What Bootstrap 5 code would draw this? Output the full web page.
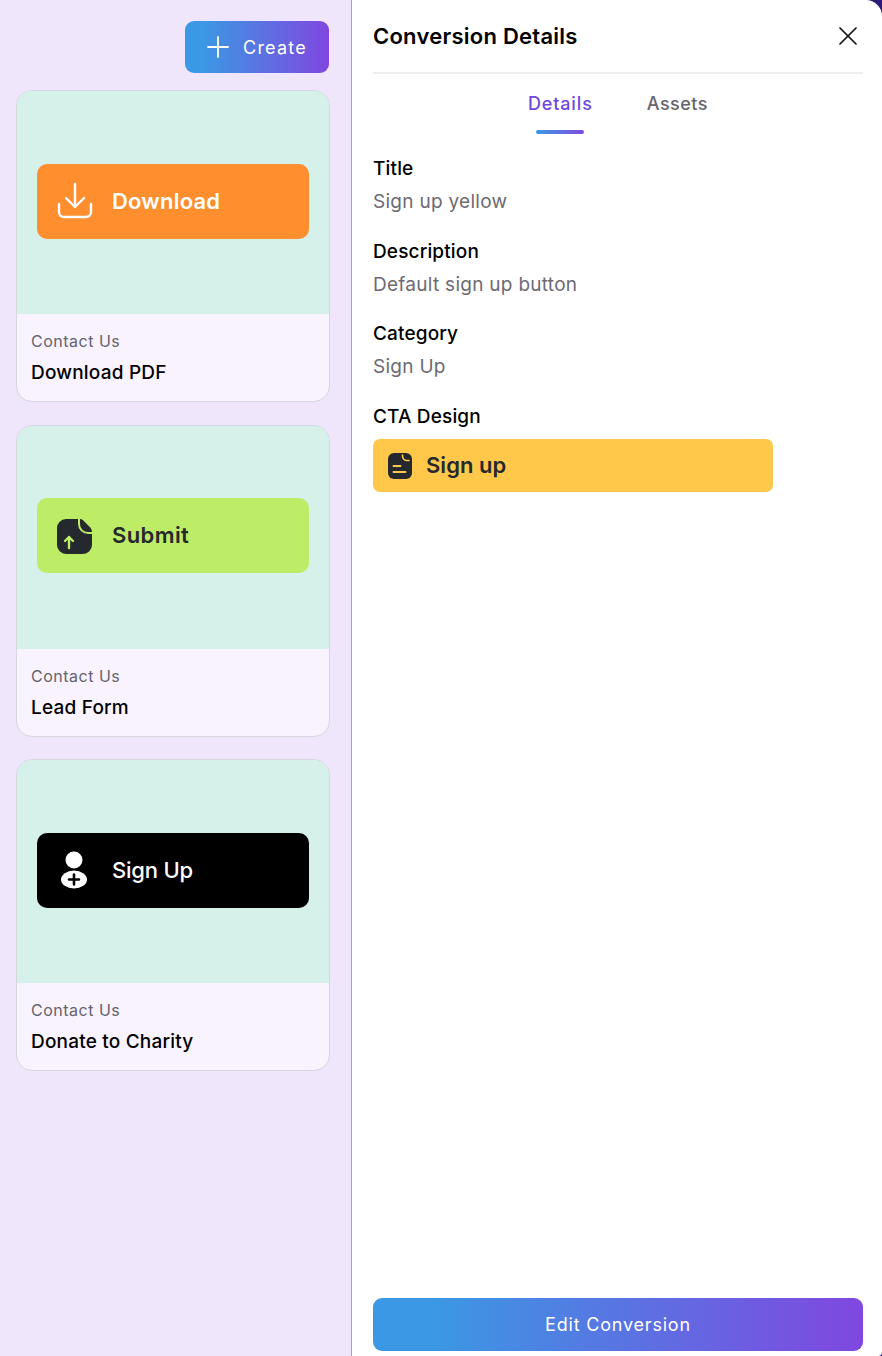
<!DOCTYPE html>
<html lang="en">
<head>
<meta charset="utf-8">
<title>Conversion Details</title>
<link href="https://cdn.jsdelivr.net/npm/bootstrap@5.3.0/dist/css/bootstrap.min.css" rel="stylesheet">
<style>
html,body{margin:0;height:1356px;overflow:hidden}
body{font-family:Inter,"Liberation Sans",sans-serif;background:#2d1a78;color:#000}
.shell{height:1356px;width:882px}
.side{width:352px;flex:0 0 352px;background:#efe6fb;border-right:1px solid #a99bc4;padding:21px 22px 0 16px}
.grad-btn{background:linear-gradient(90deg,#3b98e4 0%,#3b98e4 12%,#8047e0 100%);color:#fff;border:0;border-radius:9px;height:52px}
.grad-btn:hover{color:#fff}
.create-btn{width:144px;font-size:18px;font-weight:400;letter-spacing:1.2px;gap:14px;margin-bottom:17px}
.conv-card{width:314px;height:312px;border:1.5px solid #d6d6de;border-radius:16px;overflow:hidden;background:#f8f3fe;margin-bottom:22.5px}
.conv-media{height:223px;background:#d5f1e9;padding:0 20px 3px}
.cta-big{height:75px;border-radius:10px;padding-left:19px;gap:18px;font-size:22px;font-weight:600;letter-spacing:.2px}
.cta-orange{background:#ff8e2f;color:#fff}
.cta-lime{background:#bdec66;color:#25282d;letter-spacing:.4px}
.cta-black{background:#000;color:#fff;font-weight:500;letter-spacing:-.2px}
.conv-foot{padding:15px 14px}
.conv-cat{font-size:16px;line-height:24px;color:#66636d;letter-spacing:.5px;margin-bottom:8px}
.conv-name{font-size:19px;line-height:24px;font-weight:500;letter-spacing:.2px}
.panel{flex:1;background:#fff;border-radius:0 16px 4px 0;padding:0 19px 5px 21px}
.panel-head{height:74px;border-bottom:2px solid #eee}
.panel-title{font-size:22px;font-weight:600;margin:0;letter-spacing:.25px}
.close-x{background:none;border:0;padding:0;line-height:0;margin-right:5px}
.tabs-row{gap:54px;padding-top:16px;height:60px}
.tab-item{font-size:18px;font-weight:500;color:#67646d;position:relative;line-height:27px;letter-spacing:.5px}
.tab-on{color:#7048e0;letter-spacing:.85px}
.tab-on::after{content:"";position:absolute;left:8px;width:48px;top:40px;height:4px;border-radius:2px;background:linear-gradient(90deg,#3b98e4,#7e4ce0)}
.detail-wrap{padding-top:23px}
.detail-lab{font-size:19px;font-weight:500;line-height:24px;letter-spacing:.15px}
.detail-val{font-size:19px;line-height:28px;color:#6d6a74;letter-spacing:.28px;margin:7px 0 23.7px}
.cta-small{width:400px;height:53px;border-radius:7px;background:#ffc84b;color:#25282d;padding-left:15px;gap:14px;font-size:22px;font-weight:600;letter-spacing:.05px;margin-top:10px}
.edit-btn{font-size:18px;font-weight:400;width:490px;height:53px;letter-spacing:.8px}
</style>
</head>
<body>
<div class="shell d-flex">
  <aside class="side">
    <div class="d-flex justify-content-end">
      <button class="btn grad-btn create-btn d-flex align-items-center justify-content-center p-0" type="button">
        <svg width="22" height="22" viewBox="0 0 22 22" fill="none" stroke="#fff" stroke-width="1.8" stroke-linecap="round"><path d="M11 1v20M1 11h20"/></svg>
        <span>Create</span>
      </button>
    </div>

    <div class="conv-card">
      <div class="conv-media d-flex align-items-center">
        <div class="cta-big cta-orange w-100 d-flex align-items-center">
          <svg width="38" height="38" viewBox="0 0 38 38" fill="none" stroke="#fff" stroke-width="2.4" stroke-linecap="round" stroke-linejoin="round"><path d="M19 2v23M10 16l9 9 9-9"/><path d="M3 22v8a5 5 0 0 0 5 5h22a5 5 0 0 0 5-5v-8"/></svg>
          <span>Download</span>
        </div>
      </div>
      <div class="conv-foot">
        <div class="conv-cat">Contact Us</div>
        <div class="conv-name">Download PDF</div>
      </div>
    </div>

    <div class="conv-card">
      <div class="conv-media d-flex align-items-center">
        <div class="cta-big cta-lime w-100 d-flex align-items-center">
          <svg width="38" height="38" viewBox="0 0 38 38"><path fill="#25282d" d="M10 2h12v5a10 10 0 0 0 10 10h4v11a9 9 0 0 1-9 9H10a9 9 0 0 1-9-9V11a9 9 0 0 1 9-9z"/><path fill="#25282d" d="M24 2c1 0 2 .5 3 1.300l7 7c1 1 2 2.700 2 4.700h-4a8 8 0 0 1-8-8z"/><path fill="none" stroke="#bdec66" stroke-width="2.400" stroke-linecap="round" stroke-linejoin="round" d="M13 31V20M9 24l4-4 4 4"/></svg>
          <span>Submit</span>
        </div>
      </div>
      <div class="conv-foot">
        <div class="conv-cat">Contact Us</div>
        <div class="conv-name">Lead Form</div>
      </div>
    </div>

    <div class="conv-card">
      <div class="conv-media d-flex align-items-center">
        <div class="cta-big cta-black w-100 d-flex align-items-center">
          <svg width="38" height="38" viewBox="0 0 38 38"><circle cx="18" cy="9" r="8.500" fill="#fff"/><ellipse cx="18" cy="28.500" rx="13" ry="9" fill="#fff"/><path stroke="#000" stroke-width="2.600" stroke-linecap="round" d="M18 23.500v10M13 28.500h10"/></svg>
          <span>Sign Up</span>
        </div>
      </div>
      <div class="conv-foot">
        <div class="conv-cat">Contact Us</div>
        <div class="conv-name">Donate to Charity</div>
      </div>
    </div>
  </aside>

  <main class="panel d-flex flex-column">
    <div class="panel-head d-flex align-items-center justify-content-between">
      <h1 class="panel-title">Conversion Details</h1>
      <button class="close-x" type="button" aria-label="Close">
        <svg width="20" height="20" viewBox="0 0 20 20" fill="none" stroke="#111" stroke-width="1.700" stroke-linecap="round"><path d="M2 2l16 16M18 2L2 18"/></svg>
      </button>
    </div>
    <div class="tabs-row d-flex justify-content-center">
      <div class="tab-item tab-on">Details</div>
      <div class="tab-item">Assets</div>
    </div>
    <div class="detail-wrap">
      <div class="detail-lab">Title</div>
      <div class="detail-val">Sign up yellow</div>
      <div class="detail-lab">Description</div>
      <div class="detail-val">Default sign up button</div>
      <div class="detail-lab">Category</div>
      <div class="detail-val">Sign Up</div>
      <div class="detail-lab">CTA Design</div>
      <div class="cta-small d-flex align-items-center">
        <svg width="24" height="26" viewBox="0 0 24 26"><rect x="0" y="0" width="24" height="26" rx="6" fill="#25282d"/><path d="M14.500 2v1a4.500 4.500 0 0 0 4.500 4.500h2" fill="none" stroke="#ffc84b" stroke-width="1.600" stroke-linecap="round"/><path d="M5.500 13h7M5.500 19h12" fill="none" stroke="#ffc84b" stroke-width="2" stroke-linecap="round"/></svg>
        <span>Sign up</span>
      </div>
    </div>
    <button class="btn grad-btn edit-btn mt-auto p-0" type="button">Edit Conversion</button>
  </main>
</div>
<script src="https://cdn.jsdelivr.net/npm/bootstrap@5.3.0/dist/js/bootstrap.bundle.min.js"></script>
</body>
</html>
